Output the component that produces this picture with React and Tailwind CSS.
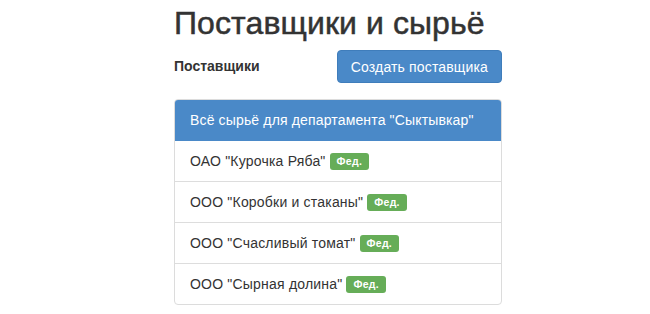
export default function App() {
  const items = [
    'ОАО "Курочка Ряба"',
    'ООО "Коробки и стаканы"',
    'ООО "Счасливый томат"',
    'ООО "Сырная долина"',
  ];
  return (
    <div className="min-h-[314px] bg-white text-[#333] pl-[174px]" style={{ fontFamily: '"Liberation Sans", Arial, sans-serif' }}>
      <div className="w-[328px]">
        <h1 className="pt-[5px] text-[32px] leading-[36px] font-medium m-0 tracking-[0.1px] [-webkit-text-stroke:0.5px_#333]">Поставщики и сырьё</h1>
        <div className="mt-[9px] flex items-center justify-between">
          <span className="text-[14px] font-bold">Поставщики</span>
          <button className="h-[33px] px-[13px] rounded-[4px] bg-[#4a89c8] border border-[#3f7dbb] text-white text-[14px] leading-[20px] tracking-[0.15px]">
            Создать поставщика
          </button>
        </div>
        <div className="mt-[16px] rounded-[4px] border border-[#dcdcdc] overflow-hidden">
          <div className="bg-[#4a89c8] text-white text-[14px] leading-[20px] px-[15px] py-[10px] border-b border-[#4a89c8] tracking-[0.15px]">
            Всё сырьё для департамента "Сыктывкар"
          </div>
          {items.map((t, i) => (
            <div
              key={i}
              className={`px-[15px] py-[10px] text-[14px] leading-[20px] flex items-center tracking-[0.2px] ${i > 0 ? 'border-t border-[#dddddd]' : ''}`}
            >
              <span>{t}</span>
              <span className="ml-[4px] bg-[#66ad58] text-white text-[10.5px] font-bold leading-[12px] rounded-[3px] px-[7px] pt-[2px] pb-[3px] tracking-[0.3px]">
                Фед.
              </span>
            </div>
          ))}
        </div>
      </div>
    </div>
  );
}
